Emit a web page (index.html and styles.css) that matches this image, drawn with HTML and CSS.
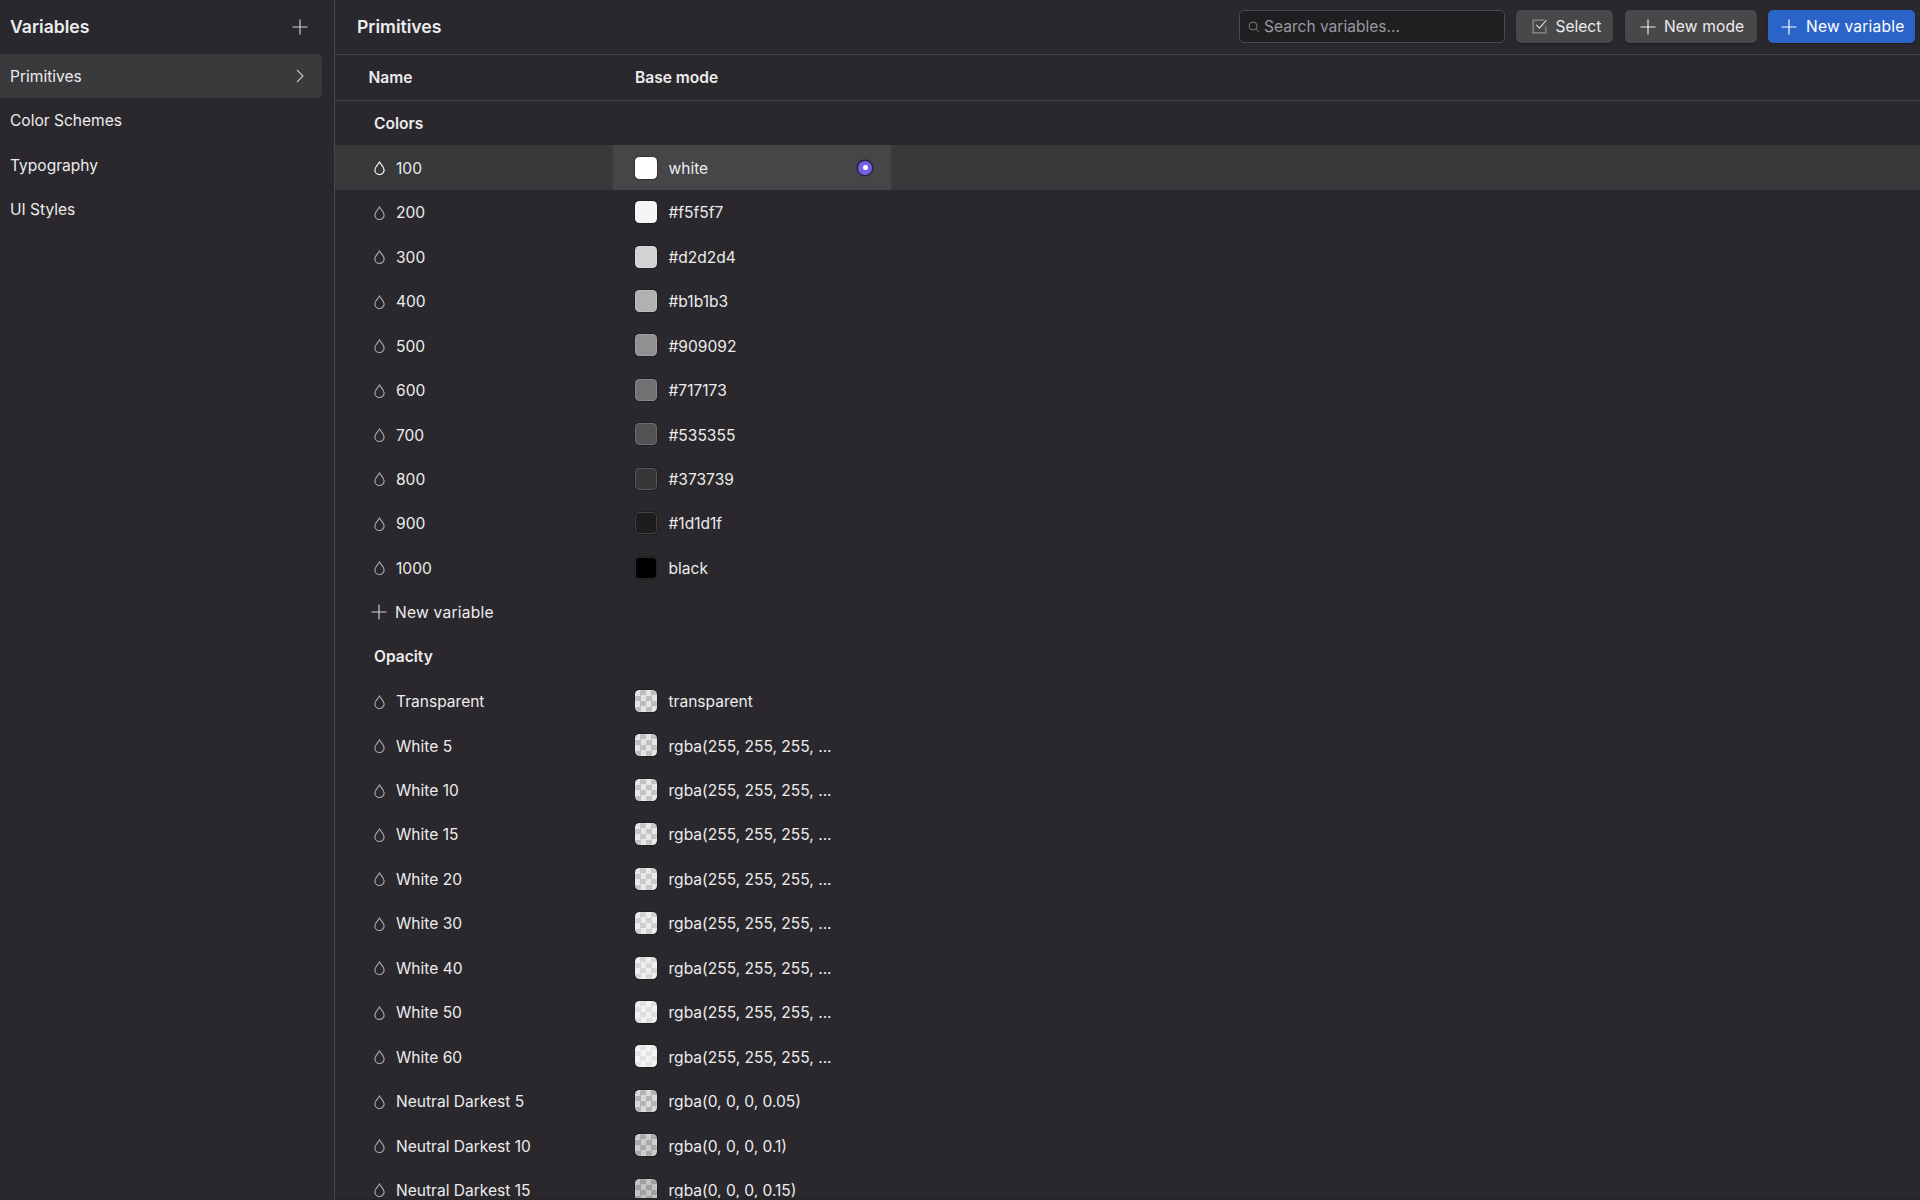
FILE: index.html
```html
<!DOCTYPE html>
<html lang="en">
<head>
<meta charset="utf-8">
<title>Variables</title>
<link rel="stylesheet" href="styles.css">
</head>
<body>
<svg class="defs" width="0" height="0" aria-hidden="true">
  <symbol id="drop" viewBox="0 0 11 14"><path d="M5.5 1C4.200 3.300 .9 5.900 .9 8.900a4.600 4.600 0 0 0 9.200 0C10.100 5.900 6.800 3.300 5.500 1Z" fill="none" stroke="currentColor" stroke-width="1.250"/></symbol>
  <symbol id="plus" viewBox="0 0 16 16"><path d="M8 .5v15M.5 8h15" fill="none" stroke="currentColor" stroke-width="1.150"/></symbol>
</svg>
<div class="app">
  <aside class="side">
    <div class="side-head"><span class="side-title">Variables</span><svg class="plus-lg"><use href="#plus"/></svg></div>
    <nav class="side-list">
      <div class="side-item active"><span>Primitives</span><svg class="chev" viewBox="0 0 8 14"><path d="M1 1l6 6-6 6" fill="none" stroke="currentColor" stroke-width="1.150"/></svg></div>
      <div class="side-item"><span>Color Schemes</span></div>
      <div class="side-item"><span>Typography</span></div>
      <div class="side-item"><span>UI Styles</span></div>
    </nav>
  </aside>
  <main class="main">
    <header class="top">
      <span class="top-title">Primitives</span>
      <div class="tools">
        <div class="search"><svg class="search-ic" viewBox="0 0 12 12"><circle cx="5" cy="5" r="4" fill="none" stroke="currentColor"/><path d="M8 8l3 3" stroke="currentColor"/></svg><span>Search variables...</span></div>
        <div class="btn btn-select"><svg class="check-ic" viewBox="0 0 16 16"><path d="M14 8v6H2V2h10" fill="none" stroke="#8f8e92" stroke-width="1.200"/><path d="M5 6.500l3 3L14.500 2" fill="none" stroke="#d8d8da" stroke-width="1.100"/></svg><span>Select</span></div>
        <div class="btn btn-mode"><svg class="plus-sm"><use href="#plus"/></svg><span>New mode</span></div>
        <div class="btn btn-blue"><svg class="plus-sm"><use href="#plus"/></svg><span>New variable</span></div>
      </div>
    </header>
    <div class="thead"><span class="th-name">Name</span><span class="th-mode">Base mode</span></div>
    <div class="rows">
      <div class="group">Colors</div>
      <div class="row selected"><div class="name"><svg class="drop"><use href="#drop"/></svg>100</div><div class="val"><i class="sw" style="background:#ffffff"></i><span>white</span><b class="radio"></b></div></div>
      <div class="row"><div class="name"><svg class="drop"><use href="#drop"/></svg>200</div><div class="val"><i class="sw" style="background:#f5f5f7"></i><span>#f5f5f7</span></div></div>
      <div class="row"><div class="name"><svg class="drop"><use href="#drop"/></svg>300</div><div class="val"><i class="sw" style="background:#d2d2d4"></i><span>#d2d2d4</span></div></div>
      <div class="row"><div class="name"><svg class="drop"><use href="#drop"/></svg>400</div><div class="val"><i class="sw" style="background:#b1b1b3"></i><span>#b1b1b3</span></div></div>
      <div class="row"><div class="name"><svg class="drop"><use href="#drop"/></svg>500</div><div class="val"><i class="sw" style="background:#909092"></i><span>#909092</span></div></div>
      <div class="row"><div class="name"><svg class="drop"><use href="#drop"/></svg>600</div><div class="val"><i class="sw" style="background:#717173"></i><span>#717173</span></div></div>
      <div class="row"><div class="name"><svg class="drop"><use href="#drop"/></svg>700</div><div class="val"><i class="sw" style="background:#535355"></i><span>#535355</span></div></div>
      <div class="row"><div class="name"><svg class="drop"><use href="#drop"/></svg>800</div><div class="val"><i class="sw" style="background:#373739"></i><span>#373739</span></div></div>
      <div class="row"><div class="name"><svg class="drop"><use href="#drop"/></svg>900</div><div class="val"><i class="sw" style="background:#1d1d1f"></i><span>#1d1d1f</span></div></div>
      <div class="row"><div class="name"><svg class="drop"><use href="#drop"/></svg>1000</div><div class="val"><i class="sw" style="background:#000000"></i><span>black</span></div></div>
      <div class="row"><div class="name new"><svg class="plus-new"><use href="#plus"/></svg>New variable</div></div>
      <div class="group">Opacity</div>
      <div class="row"><div class="name"><svg class="drop"><use href="#drop"/></svg>Transparent</div><div class="val"><i class="sw chk"></i><span>transparent</span></div></div>
      <div class="row"><div class="name"><svg class="drop"><use href="#drop"/></svg>White 5</div><div class="val"><i class="sw chk" style="--c:rgba(255,255,255,.05)"></i><span>rgba(255, 255, 255, ...</span></div></div>
      <div class="row"><div class="name"><svg class="drop"><use href="#drop"/></svg>White 10</div><div class="val"><i class="sw chk" style="--c:rgba(255,255,255,.1)"></i><span>rgba(255, 255, 255, ...</span></div></div>
      <div class="row"><div class="name"><svg class="drop"><use href="#drop"/></svg>White 15</div><div class="val"><i class="sw chk" style="--c:rgba(255,255,255,.15)"></i><span>rgba(255, 255, 255, ...</span></div></div>
      <div class="row"><div class="name"><svg class="drop"><use href="#drop"/></svg>White 20</div><div class="val"><i class="sw chk" style="--c:rgba(255,255,255,.2)"></i><span>rgba(255, 255, 255, ...</span></div></div>
      <div class="row"><div class="name"><svg class="drop"><use href="#drop"/></svg>White 30</div><div class="val"><i class="sw chk" style="--c:rgba(255,255,255,.3)"></i><span>rgba(255, 255, 255, ...</span></div></div>
      <div class="row"><div class="name"><svg class="drop"><use href="#drop"/></svg>White 40</div><div class="val"><i class="sw chk" style="--c:rgba(255,255,255,.4)"></i><span>rgba(255, 255, 255, ...</span></div></div>
      <div class="row"><div class="name"><svg class="drop"><use href="#drop"/></svg>White 50</div><div class="val"><i class="sw chk" style="--c:rgba(255,255,255,.5)"></i><span>rgba(255, 255, 255, ...</span></div></div>
      <div class="row"><div class="name"><svg class="drop"><use href="#drop"/></svg>White 60</div><div class="val"><i class="sw chk" style="--c:rgba(255,255,255,.6)"></i><span>rgba(255, 255, 255, ...</span></div></div>
      <div class="row"><div class="name"><svg class="drop"><use href="#drop"/></svg>Neutral Darkest 5</div><div class="val"><i class="sw chk" style="--c:rgba(0,0,0,.05)"></i><span>rgba(0, 0, 0, 0.05)</span></div></div>
      <div class="row"><div class="name"><svg class="drop"><use href="#drop"/></svg>Neutral Darkest 10</div><div class="val"><i class="sw chk" style="--c:rgba(0,0,0,.1)"></i><span>rgba(0, 0, 0, 0.1)</span></div></div>
      <div class="row"><div class="name"><svg class="drop"><use href="#drop"/></svg>Neutral Darkest 15</div><div class="val"><i class="sw chk" style="--c:rgba(0,0,0,.15)"></i><span>rgba(0, 0, 0, 0.15)</span></div></div>
    </div>
  </main>
</div>
</body>
</html>
```
FILE: styles.css
```css
* { box-sizing: border-box; }
html, body { margin: 0; height: 100%; overflow: hidden; }
body { background: #262528; color: #ececed; font-family: Inter, "Liberation Sans", sans-serif; font-size: 15.55px; }
.defs { position: absolute; }
.app { display: flex; height: 1200px; overflow: hidden; }
.side { width: 335px; flex: none; border-right: 1px solid #454447; background: #2a282c; }
.side-head { height: 54px; padding: 0 26px 1px 10px; display: flex; align-items: center; justify-content: space-between; }
.side-title { font-size: 17.6px; font-weight: 600; }
.plus-lg { width: 16px; height: 16px; color: #d0d0d2; }
.side-list { display: flex; flex-direction: column; }
.side-item { height: 44.44px; width: 322px; padding: .5px 18px 0 10px; display: flex; align-items: center; justify-content: space-between; }
.side-item.active { background: #3a393c; border-radius: 0 5px 5px 0; }
.chev { width: 8px; height: 14px; color: #c4c4c6; }
.main { flex: 1; min-width: 0; height: 1198px; overflow: hidden; background: #2a282c; }
.top { height: 55px; border-bottom: 1px solid #454447; padding: 0 5px 1px 22px; display: flex; align-items: center; justify-content: space-between; }
.top-title { font-size: 17.6px; font-weight: 600; }
.tools { display: flex; align-items: center; gap: 11px; }
.search { width: 266px; height: 33px; background: #1f1e21; border: 1px solid #4a494d; border-radius: 5px; display: flex; align-items: center; padding-left: 8px; color: #9a999d; }
.search-ic { width: 12px; height: 12px; margin-right: 4px; color: #77767a; }
.btn { height: 33px; border-radius: 5px; background: #48474a; display: flex; align-items: center; box-shadow: 0 1px 2px rgba(0,0,0,.3); }
.btn-select { width: 97px; padding-left: 15px; gap: 7.500px; }
.check-ic { width: 17px; height: 17px; }
.btn-mode { width: 132px; margin-left: 1px; padding-left: 15px; gap: 8px; letter-spacing: .15px; }
.btn-blue { width: 147px; padding-left: 13px; gap: 9px; background: #2b64c8; color: #fff; letter-spacing: .22px; }
.plus-sm { width: 16px; height: 16px; }
.thead { height: 46px; border-bottom: 1px solid #454447; display: flex; align-items: center; font-weight: 600; }
.th-name { width: 277.500px; padding-left: 33.500px; }
.th-mode { padding-left: 22.500px; }
.rows { display: flex; flex-direction: column; }
.group { height: 44.44px; flex: none; display: flex; align-items: center; padding: 1px 0 0 39px; font-weight: 600; }
.row { height: 44.44px; flex: none; display: flex; }
.row.selected { background: #39383b; }
.name { width: 277.500px; padding: 1.500px 0 0 39px; display: flex; align-items: center; }
.drop { width: 11px; height: 14px; margin-right: 11px; color: #a3a2a6; }
.selected .drop { color: #f4f4f5; }
.plus-new { width: 16px; height: 16px; margin: -1px 8px 0 -3px; color: #d0d0d2; }
.new { letter-spacing: .25px; }
.val { width: 278px; padding: 0 18.500px 0 22.500px; display: flex; align-items: center; position: relative; }
.selected .val { background: #464548; }
.val span { margin-left: 11.500px; padding-top: 1.500px; }
.sw { width: 22px; height: 22px; border-radius: 4.500px; box-shadow: 0 0 0 1px rgba(0,0,0,.25), inset 0 0 0 1px rgba(255,255,255,.16); flex: none; }
.chk { background-color: #e4e4e4; background-image: linear-gradient(var(--c, transparent), var(--c, transparent)), conic-gradient(#bcbcbc 25%, transparent 0 50%, #bcbcbc 0 75%, transparent 0); background-size: 100% 100%, 11px 11px; }
.radio { margin-left: auto; width: 14px; height: 14px; border-radius: 50%; background: #7a5fe6; box-shadow: 0 0 0 1.500px #26243a; position: relative; display: flex; align-items: center; justify-content: center; }
.radio::after { content: ""; width: 5px; height: 5px; border-radius: 50%; background: #fff; }
```
